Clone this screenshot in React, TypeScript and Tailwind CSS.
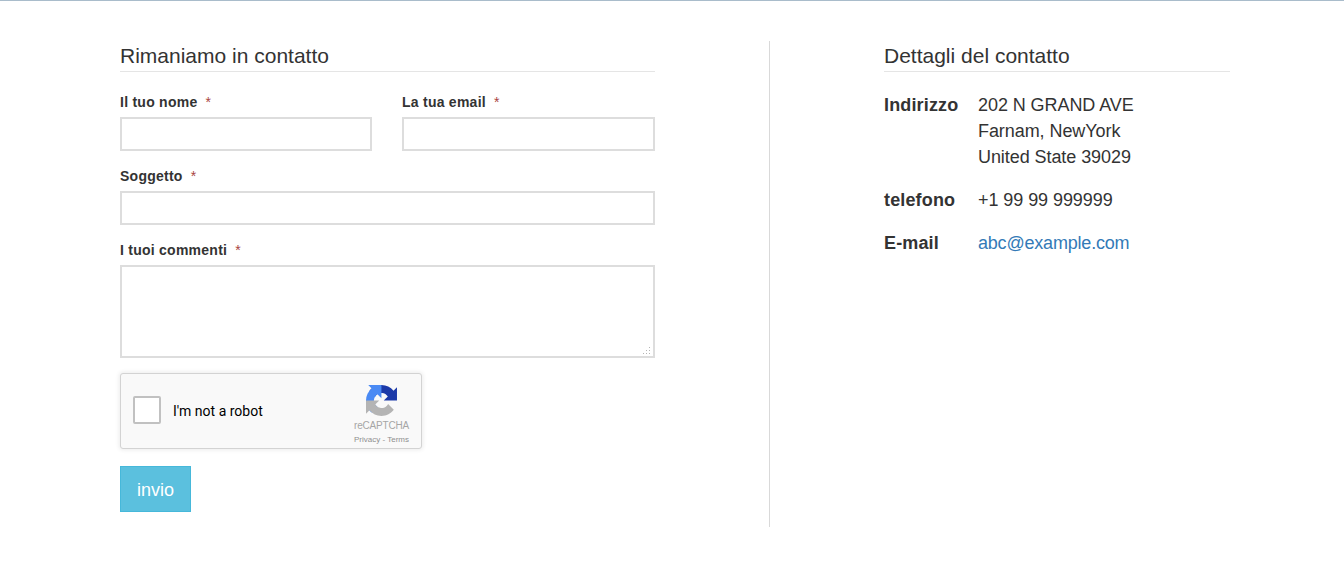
function Field({ label, children }: { label: string; children: React.ReactNode }) {
  return (
    <div className="mb-[15px]">
      <label className="block h-5 mb-[5px] text-sm leading-5 font-bold tracking-[0.25px] text-[#333]">
        {label}
        <span className="ml-2 font-normal text-[#a94442]">*</span>
      </label>
      {children}
    </div>
  )
}

const inputClass = 'block w-full h-[34px] border-2 border-[#ddd] bg-white outline-none'

function RecaptchaLogo() {
  return (
    <svg viewBox="0 0 64 64" className="w-[31px] h-[31px]">
      <path d="M64 31.955l-.033-1.37V4.687l-7.16 7.16C50.948 4.674 42.033.093 32.05.093c-10.4 0-19.622 4.96-25.458 12.64l11.736 11.86a15.55 15.55 0 0 1 4.754-5.334c2.05-1.6 4.952-2.906 8.968-2.906.485 0 .86.057 1.135.163 4.976.393 9.29 3.14 11.83 7.124l-8.307 8.307 32.29.001" fill="#1c3aa9" />
      <path d="M31.862.094l-1.37.033H4.594l7.16 7.16C4.58 13.147 0 22.06 0 32.046c0 10.4 4.96 19.622 12.64 25.458L24.5 45.768a15.55 15.55 0 0 1-5.334-4.754c-1.6-2.05-2.906-4.952-2.906-8.968 0-.485.057-.86.163-1.135.393-4.976 3.14-9.29 7.124-11.83l8.307 8.307L31.862.094" fill="#4a8af4" />
      <path d="M.001 32.045l.033 1.37v25.898l7.16-7.16c5.86 7.173 14.774 11.754 24.76 11.754 10.4 0 19.622-4.96 25.458-12.64L45.677 39.4a15.55 15.55 0 0 1-4.754 5.334c-2.05 1.6-4.952 2.906-8.968 2.906-.485 0-.86-.057-1.135-.163-4.976-.393-9.29-3.14-11.83-7.124l8.307-8.307-32.29.001" fill="#b4b4b4" />
    </svg>
  )
}

function Recaptcha() {
  return (
    <div className="flex items-center w-[302px] h-[76px] pl-3 pr-3 bg-[#f9f9f9] border border-[#d3d3d3] rounded-[3px] shadow-[0_0_4px_1px_rgba(0,0,0,0.08)]">
      <div className="w-7 h-7 mb-0.5 bg-white border-2 border-[#c1c1c1] rounded-[2px]" />
      <span className="ml-3 flex-1 font-['Roboto',sans-serif] text-sm text-black">I'm not a robot</span>
      <div className="flex flex-col items-center self-start pt-[11px] text-[#a6a6a6]">
        <RecaptchaLogo />
        <div className="mt-[3px] text-[10px] leading-[14px] tracking-[-0.2px]">reCAPTCHA</div>
        <div className="mt-px text-[8px] leading-[12px] text-[#8f8f8f]">Privacy - Terms</div>
      </div>
    </div>
  )
}

function ResizeGrip() {
  return (
    <svg viewBox="0 0 9 9" className="absolute right-[4px] bottom-[3px] w-[9px] h-[9px]" fill="#b5b5b5">
      <rect x="7" y="1" width="1" height="1" />
      <rect x="4" y="4" width="1" height="1" />
      <rect x="7" y="4" width="1" height="1" />
      <rect x="1" y="7" width="1" height="1" />
      <rect x="4" y="7" width="1" height="1" />
      <rect x="7" y="7" width="1" height="1" />
    </svg>
  )
}

function Heading({ children }: { children: React.ReactNode }) {
  return (
    <h2 className="h-[31px] mb-5 border-b border-[#e5e5e5] text-[21px] leading-[30px] text-[#333]">{children}</h2>
  )
}

function DetailRow({ label, children }: { label: string; children: React.ReactNode }) {
  return (
    <div className="flex mb-[17px] text-lg leading-[26px] tracking-[-0.07px] text-[#333]">
      <strong className="w-[94px] font-bold tracking-[0.15px]">{label}</strong>
      <div>{children}</div>
    </div>
  )
}

export default function App() {
  return (
    <div className="min-h-screen bg-white border-t border-[#a9bccb] pt-10 pl-[120px] pr-[114px] font-['Liberation_Sans',Arial,sans-serif]">
      <div className="flex">
        <section className="w-[535px] pb-[15px]">
          <Heading>Rimaniamo in contatto</Heading>
          <div className="grid grid-cols-[252px_1fr] gap-x-[30px]">
            <Field label="Il tuo nome">
              <input className={inputClass} />
            </Field>
            <Field label="La tua email">
              <input className={inputClass} />
            </Field>
          </div>
          <Field label="Soggetto">
            <input className={inputClass} />
          </Field>
          <Field label="I tuoi commenti">
            <div className="relative">
              <textarea className="block w-full h-[93px] border-2 border-[#ddd] bg-white outline-none resize-none" />
              <ResizeGrip />
            </div>
          </Field>
          <Recaptcha />
          <button className="block w-[71px] h-[46px] mt-[17px] pt-0.5 bg-[#5bc0de] border border-[#46b8da] text-lg text-white">
            invio
          </button>
        </section>

        <div className="w-px ml-[114px] mr-[114px] bg-[#d9d9d9]" />

        <section className="w-[346px]">
          <Heading>Dettagli del contatto</Heading>
          <DetailRow label="Indirizzo">
            202 N GRAND AVE
            <br />
            Farnam, NewYork
            <br />
            United State 39029
          </DetailRow>
          <DetailRow label="telefono">+1 99 99 999999</DetailRow>
          <DetailRow label="E-mail">
            <a className="text-[#337ab7] tracking-[-0.2px]">abc@example.com</a>
          </DetailRow>
        </section>
      </div>
    </div>
  )
}
